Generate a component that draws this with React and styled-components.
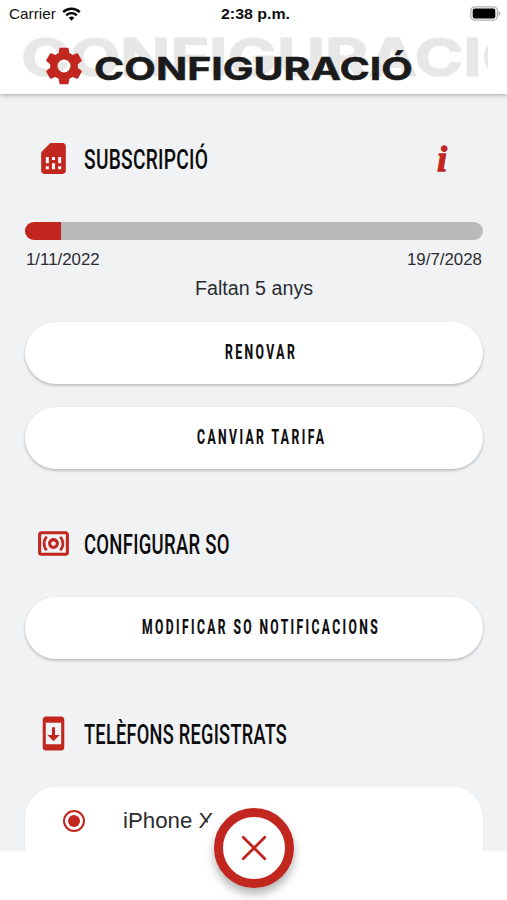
import React, { useLayoutEffect, useRef, useState } from "react";
import styled, { createGlobalStyle } from "styled-components";
import {
  MdSimCard,
  MdOutlineSurroundSound,
  MdSystemUpdate,
} from "react-icons/md";

const RED = "#c1271f";

const GlobalStyle = createGlobalStyle`
  * { box-sizing: border-box; }
  body { margin: 0; background: #fff; overflow: hidden; }
`;

const Screen = styled.div`
  position: relative;
  width: 507px;
  height: 900px;
  overflow: hidden;
  display: flex;
  flex-direction: column;
  background: #fff;
  color: #2b2c30;
  font-family: "Liberation Sans", Arial, sans-serif;
`;

const Header = styled.header`
  position: relative;
  z-index: 1;
  flex: none;
  height: 94px;
  background: #fff;
  box-shadow: 0 1px 5px rgba(0, 0, 0, 0.32);
`;

const StatusBar = styled.div`
  display: grid;
  grid-template-columns: 1fr auto 1fr;
  align-items: center;
  height: 28px;
  padding: 0 6px 0 9px;
  color: #111;
`;

const Carrier = styled.div`
  display: flex;
  align-items: center;
  gap: 6px;
`;

const BatterySlot = styled.div`
  display: flex;
  justify-content: flex-end;
  padding-bottom: 2px;
`;

const TitleRow = styled.div`
  position: relative;
  display: flex;
  align-items: center;
  height: 66px;
  padding: 10px 0 0 45px;
`;

const Ghost = styled.div`
  position: absolute;
  left: 21px;
  top: 9px;
  width: 467px;
  height: 42px;
  overflow: hidden;
`;

const GearSvg = styled.svg`
  position: relative;
  flex: none;
  width: 38px;
  height: 38px;
  margin-top: -1px;
`;

const TitleSlot = styled.div`
  position: relative;
  margin: 5px 0 0 11px;
`;

const TextBox = styled.div`
  flex: none;
  width: ${(p) => p.$width}px;
  height: ${(p) => p.$height}px;
  line-height: ${(p) => p.$height}px;
  white-space: nowrap;
`;

const TextRun = styled.span`
  display: inline-block;
  transform-origin: 0 50%;
`;

const DisplayRun = styled(TextRun)`
  font-family: Inter, sans-serif;
  font-weight: 700;
  font-size: ${(p) => p.$size}px;
  color: ${(p) => p.$color};
  -webkit-text-stroke: ${(p) => p.$stroke || 0}px ${(p) => p.$color};
`;

const HeadingRun = styled(TextRun)`
  font-family: Roboto, sans-serif;
  font-weight: 500;
  font-size: 27.5px;
  letter-spacing: 0.4px;
  color: #0c0c0d;
`;

const ButtonRun = styled(TextRun)`
  font-family: Roboto, sans-serif;
  font-weight: 700;
  font-size: 20px;
  letter-spacing: 4px;
  color: #0c0c0d;
  -webkit-text-stroke: 0.2px #0c0c0d;
`;

const BodyRun = styled(TextRun)`
  font-size: ${(p) => p.$size}px;
  font-weight: ${(p) => p.$weight || 400};
`;

/* Stretches or condenses a run of text to an exact width. */
function FitText({ as: Run, width, height, children, ...rest }) {
  const ref = useRef(null);
  const [scale, setScale] = useState(1);
  useLayoutEffect(() => {
    setScale(width / ref.current.offsetWidth);
  }, [width, children]);
  return (
    <TextBox $width={width} $height={height}>
      <Run ref={ref} style={{ transform: `scaleX(${scale})` }} {...rest}>
        {children}
      </Run>
    </TextBox>
  );
}

const Content = styled.main`
  flex: none;
  height: 757px;
  overflow: hidden;
  display: flex;
  flex-direction: column;
  padding: 44px 24px 0 25px;
  background: #f0f2f4;
`;

const SectionHeading = styled.div`
  flex: none;
  display: flex;
  align-items: center;
  height: 40px;
  margin-top: ${(p) => p.$top || 0}px;
`;

const HeadingText = styled.div`
  padding-top: 4px;
`;

const IconSlot = styled.div`
  display: flex;
  justify-content: center;
  width: 57px;
  margin-right: 2px;
  color: ${RED};
`;

const InfoMark = styled.span`
  margin-left: auto;
  padding: 3px 36px 0 0;
  font: italic 700 35px/40px "Liberation Serif", serif;
  color: ${RED};
  -webkit-text-stroke: 1.3px ${RED};
`;

const Track = styled.div`
  flex: none;
  height: 18px;
  margin: 44px 0 0 0;
  border-radius: 9px;
  overflow: hidden;
  background: #bababa;
`;

const TrackFill = styled.div`
  width: 36px;
  height: 100%;
  background: ${RED};
`;

const Dates = styled.div`
  display: flex;
  justify-content: space-between;
  padding: 8px 2px 0 1px;
`;

const Remaining = styled.div`
  display: flex;
  justify-content: center;
  margin: 6px 0 22px;
`;

const PillButton = styled.button`
  flex: none;
  display: flex;
  align-items: center;
  justify-content: center;
  width: 458px;
  height: 62px;
  margin: ${(p) => p.$top || 0}px 0 0;
  padding: 0 0 2px 14px;
  border: 0;
  border-radius: 31px;
  background: #fff;
  box-shadow: 0 1.5px 3px rgba(0, 0, 0, 0.25);
`;

const PhoneCard = styled.div`
  flex: none;
  display: flex;
  align-items: center;
  width: 458px;
  height: 90px;
  margin-top: 34px;
  padding: 0 0 23px 38px;
  border-radius: 31px 31px 0 0;
  background: #fff;
  box-shadow: 0 1px 2px rgba(0, 0, 0, 0.1);
`;

const Radio = styled.span`
  display: grid;
  place-items: center;
  width: 22px;
  height: 22px;
  margin-right: 38px;
  border: 2.5px solid ${RED};
  border-radius: 50%;

  &::after {
    content: "";
    width: 12px;
    height: 12px;
    border-radius: 50%;
    background: ${RED};
  }
`;

const CloseNotch = styled.div`
  position: absolute;
  left: 201px;
  top: 795px;
  display: grid;
  place-items: center;
  width: 106px;
  height: 106px;
  border-radius: 50%;
  background: #fff;
`;

const CloseButton = styled.button`
  display: grid;
  place-items: center;
  width: 80px;
  height: 80px;
  padding: 0;
  border: 9px solid ${RED};
  border-radius: 50%;
  background: #fff;
  color: ${RED};
  box-shadow: 0 6px 10px rgba(0, 0, 0, 0.3);
`;

function GearIcon() {
  return (
    <GearSvg viewBox="-19 -19 38 38">
      <circle r="10.2" fill="none" stroke={RED} strokeWidth="7.4" />
      {[0, 60, 120, 180, 240, 300].map((angle) => (
        <path key={angle} transform={`rotate(${angle})`} d="M-5.6-11.5-4.6-17.6q.1-.7.8-.7h7.6q.7 0 .8.7l1 6.1z" fill={RED} />
      ))}
    </GearSvg>
  );
}

function WifiIcon() {
  return (
    <svg width="19" height="14" viewBox="0 0 19 14" fill="none" stroke="#050505">
      <path d="M1.2 5.1a12 12 0 0 1 16.6 0" strokeWidth="2.5" />
      <path d="M4.2 8.3a7.6 7.6 0 0 1 10.6 0" strokeWidth="2.4" />
      <path d="M6.7 10.8a4 4 0 0 1 5.6 0L9.5 13.7z" fill="#050505" stroke="none" />
    </svg>
  );
}

function BatteryIcon() {
  return (
    <svg width="31" height="15" viewBox="0 0 31 15">
      <rect x="0.8" y="0.8" width="26.6" height="13.4" rx="4" fill="#fff" stroke="#b2b2b2" strokeWidth="1.3" />
      <rect x="2.7" y="2.6" width="22.6" height="9.8" rx="2" fill="#000" />
      <path d="M28.6 5.2q1.7.6 1.7 2.3t-1.7 2.3z" fill="#a5a5a5" />
    </svg>
  );
}

function CloseIcon() {
  return (
    <svg width="26" height="26" viewBox="0 0 26 26" stroke="currentColor" strokeWidth="2.8" strokeLinecap="round">
      <path d="M2.2 2.2l21.6 21.6M23.8 2.2L2.2 23.8" />
    </svg>
  );
}

function Heading({ icon, width, top, children, action }) {
  return (
    <SectionHeading $top={top}>
      <IconSlot>{icon}</IconSlot>
      <HeadingText>
        <FitText as={HeadingRun} width={width} height={36}>{children}</FitText>
      </HeadingText>
      {action}
    </SectionHeading>
  );
}

function Pill({ width, top, children }) {
  return (
    <PillButton $top={top}>
      <FitText as={ButtonRun} width={width} height={30}>{children}</FitText>
    </PillButton>
  );
}

export default function App() {
  return (
    <Screen>
      <GlobalStyle />
      <Header>
        <StatusBar>
          <Carrier>
            <FitText as={BodyRun} $size={15} width={47} height={28}>Carrier</FitText>
            <WifiIcon />
          </Carrier>
          <FitText as={BodyRun} $size={15} $weight={700} width={69} height={28}>2:38 p.m.</FitText>
          <BatterySlot><BatteryIcon /></BatterySlot>
        </StatusBar>
        <TitleRow>
          <Ghost aria-hidden="true">
            <FitText as={DisplayRun} $size={52} $stroke={1.2} $color="#e7e7e7" width={511} height={42}>CONFIGURACIÓ</FitText>
          </Ghost>
          <GearIcon />
          <TitleSlot>
            <FitText as={DisplayRun} $size={31.5} $stroke={0.5} $color="#1b1b1c" width={319} height={40}>CONFIGURACIÓ</FitText>
          </TitleSlot>
        </TitleRow>
      </Header>
      <Content>
        <Heading icon={<MdSimCard size={37} />} width={124} action={<InfoMark>i</InfoMark>}>SUBSCRIPCIÓ</Heading>
        <Track><TrackFill /></Track>
        <Dates>
          <FitText as={BodyRun} $size={16.5} width={73.5} height={22}>1/11/2022</FitText>
          <FitText as={BodyRun} $size={16.5} width={74.5} height={22}>19/7/2028</FitText>
        </Dates>
        <Remaining>
          <FitText as={BodyRun} $size={20} width={118} height={24}>Faltan 5 anys</FitText>
        </Remaining>
        <Pill width={72}>RENOVAR</Pill>
        <Pill top={23} width={129}>CANVIAR TARIFA</Pill>
        <Heading top={54} icon={<MdOutlineSurroundSound size={37} />} width={146}>CONFIGURAR SO</Heading>
        <Pill top={34} width={238}>MODIFICAR SO NOTIFICACIONS</Pill>
        <Heading top={54} icon={<MdSystemUpdate size={37} />} width={203}>TELÈFONS REGISTRATS</Heading>
        <PhoneCard>
          <Radio />
          <FitText as={BodyRun} $size={22} width={90} height={26}>iPhone X</FitText>
        </PhoneCard>
      </Content>
      <CloseNotch>
        <CloseButton aria-label="Tancar"><CloseIcon /></CloseButton>
      </CloseNotch>
    </Screen>
  );
}
